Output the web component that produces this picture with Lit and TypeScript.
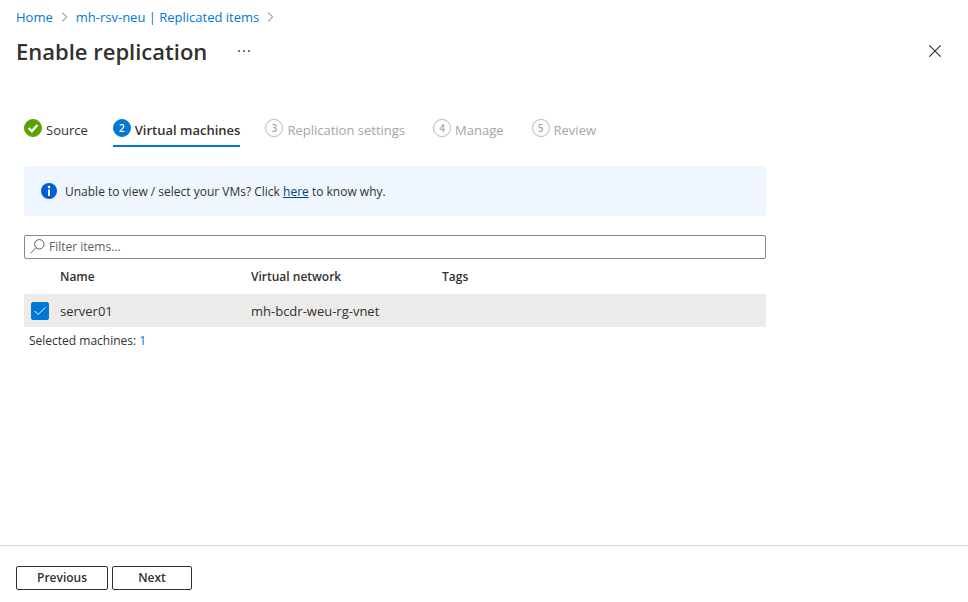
import { LitElement, html, css, svg } from "lit";
import { customElement, state } from "lit/decorators.js";
import { classMap } from "lit/directives/class-map.js";

interface Step {
  label: string;
  status: "done" | "current" | "pending";
}

interface Machine {
  name: string;
  network: string;
  tags: string;
}

const steps: Step[] = [
  { label: "Source", status: "done" },
  { label: "Virtual machines", status: "current" },
  { label: "Replication settings", status: "pending" },
  { label: "Manage", status: "pending" },
  { label: "Review", status: "pending" },
];

const machines: Machine[] = [
  { name: "server01", network: "mh-bcdr-weu-rg-vnet", tags: "" },
];

const chevron = html`<svg class="chevron" width="7" height="10" viewBox="0 0 7 10" aria-hidden="true">
  ${svg`<path d="M1 .5 5.7 5 1 9.5" fill="none" stroke="#797775" />`}
</svg>`;

@customElement("app-root")
export class AppRoot extends LitElement {
  @state() private filter = "";
  @state() private selected = new Set<string>(["server01"]);

  static styles = css`
    :host {
      display: flex;
      flex-direction: column;
      min-height: 100vh;
      background: #fff;
      color: #323130;
      font: 13px/20px "Open Sans", "Noto Sans", sans-serif;
    }
    * {
      box-sizing: border-box;
    }
    button,
    input {
      font: inherit;
      color: inherit;
    }
    button {
      cursor: pointer;
    }
    a {
      color: #0078d4;
      text-decoration: none;
    }
    svg {
      display: block;
      flex: none;
    }
    .breadcrumb {
      display: flex;
      align-items: center;
      gap: 8px;
      padding: 7px 16px 0;
    }
    .title-bar {
      display: flex;
      align-items: center;
      height: 48px;
      padding: 0 20px 0 16px;
    }
    h1 {
      margin: 0;
      font-size: 22px;
      line-height: 32px;
      font-weight: 600;
    }
    .icon-button {
      display: grid;
      place-items: center;
      width: 26px;
      height: 26px;
      padding: 0;
      border: 0;
      background: none;
    }
    .more {
      margin-left: 24px;
    }
    .close {
      margin-left: auto;
    }
    main {
      flex: 1;
      width: 100%;
      max-width: 790px;
      padding: 44px 24px 24px;
    }
    .steps {
      display: flex;
      gap: 25px;
    }
    .step {
      display: flex;
      align-items: flex-start;
      gap: 4px;
      height: 28px;
      padding: 0 0 4px;
      border: 0;
      border-bottom: 2px solid transparent;
      background: none;
      line-height: 22px;
      white-space: nowrap;
    }
    .step.current {
      border-color: #0078d4;
      font-weight: 600;
    }
    .step.pending {
      padding-right: 3px;
      color: #a6a6a6;
    }
    .badge {
      display: grid;
      place-items: center;
      width: 18px;
      height: 18px;
      border: 1px solid #b8b8b8;
      border-radius: 50%;
      font-size: 10px;
      line-height: 16px;
      font-weight: 600;
    }
    .done .badge {
      border-color: #57a300;
      background: #57a300;
    }
    .current .badge {
      border-color: #0078d4;
      background: #0078d4;
      color: #fff;
    }
    .notice {
      display: flex;
      align-items: center;
      gap: 8px;
      height: 50px;
      margin-top: 19px;
      padding: 0 17px;
      border-radius: 2px;
      background: #eff6ff;
      font-size: 12px;
    }
    .notice p {
      margin: 0;
      padding-top: 2px;
    }
    .notice a {
      color: #004578;
      text-decoration: underline;
    }
    .filter {
      display: flex;
      align-items: center;
      gap: 4px;
      height: 24px;
      margin-top: 19px;
      padding: 0 5px;
      border: 1px solid #8a8886;
      border-radius: 2px;
      font-size: 12px;
    }
    .filter svg {
      margin-bottom: 2px;
    }
    .filter input {
      flex: 1;
      min-width: 0;
      padding: 0;
      border: 0;
      outline: 0;
      background: none;
    }
    .filter input::placeholder {
      color: #605e5c;
      opacity: 1;
    }
    table {
      width: 100%;
      table-layout: fixed;
      border-collapse: collapse;
      text-align: left;
    }
    th {
      height: 35px;
      padding: 0;
      font-size: 12px;
      font-weight: 600;
    }
    td {
      height: 33px;
      padding: 0;
    }
    .pick {
      width: 36px;
      padding-left: 7px;
    }
    .text-col {
      width: 191px;
    }
    tr.selected {
      background: #edebe9;
    }
    .check {
      display: grid;
      place-items: center;
      width: 18px;
      height: 18px;
      border: 1px solid #323130;
      border-radius: 2px;
    }
    .check input,
    .check svg {
      grid-area: 1 / 1;
    }
    .check input {
      width: 16px;
      height: 16px;
      margin: 0;
      opacity: 0;
    }
    .check svg {
      visibility: hidden;
      pointer-events: none;
    }
    .selected .check {
      border-color: #0078d4;
      background: #0078d4;
    }
    .selected .check svg {
      visibility: visible;
    }
    .summary {
      margin: 4px 0 0;
      padding-left: 5px;
      font-size: 12px;
    }
    footer {
      display: flex;
      gap: 4px;
      padding: 20px 16px 12px;
      border-top: 1px solid #d6d6d6;
    }
    .action {
      min-width: 80px;
      height: 24px;
      padding: 0 20px;
      border: 1px solid #323130;
      border-radius: 2px;
      background: #fff;
      font-size: 12px;
      font-weight: 600;
    }
  `;

  private toggle(name: string) {
    const next = new Set(this.selected);
    if (!next.delete(name)) next.add(name);
    this.selected = next;
  }

  private renderStep(step: Step, index: number) {
    return html`<button
      class=${classMap({ step: true, [step.status]: true })}
      role="tab"
      aria-selected=${step.status === "current"}
      ?disabled=${step.status === "pending"}
    >
      <span class="badge"
        >${step.status === "done"
          ? html`<svg width="16" height="16" viewBox="0 0 16 16" aria-label="Completed">
              <path d="M3.6 8 6.8 11.2 12.4 5" fill="none" stroke="#fff" stroke-width="2.4" />
            </svg>`
          : index + 1}</span
      >
      <span>${step.label}</span>
    </button>`;
  }

  private renderRow(machine: Machine) {
    const picked = this.selected.has(machine.name);
    return html`<tr class=${classMap({ selected: picked })}>
      <td class="pick">
        <label class="check">
          <input
            type="checkbox"
            aria-label=${`Select ${machine.name}`}
            .checked=${picked}
            @change=${() => this.toggle(machine.name)}
          />
          <svg width="12" height="10" viewBox="0 0 12 10" aria-hidden="true">
            <path d="M.7 5 4.2 8.5 11.3 1.4" fill="none" stroke="#fff" />
          </svg>
        </label>
      </td>
      <td>${machine.name}</td>
      <td>${machine.network}</td>
      <td>${machine.tags}</td>
    </tr>`;
  }

  render() {
    const rows = machines.filter((m) => m.name.includes(this.filter));
    return html`
      <nav class="breadcrumb" aria-label="Breadcrumb">
        <a href="#home">Home</a>${chevron}
        <a href="#items">mh-rsv-neu | Replicated items</a>${chevron}
      </nav>
      <header class="title-bar">
        <h1>Enable replication</h1>
        <button class="icon-button more" aria-label="More actions">
          <svg width="12" height="2" viewBox="0 0 12 2" fill="#797775">
            <rect width="2" height="2" />
            <rect x="5" width="2" height="2" />
            <rect x="10" width="2" height="2" />
          </svg>
        </button>
        <button class="icon-button close" aria-label="Close">
          <svg width="12" height="12" viewBox="0 0 12 12">
            <path d="M.3 .3 11.7 11.7M11.7 .3 .3 11.7" stroke="#323130" stroke-width="1.1" />
          </svg>
        </button>
      </header>
      <main>
        <div class="steps" role="tablist">${steps.map((s, i) => this.renderStep(s, i))}</div>
        <div class="notice">
          <svg width="16" height="16" viewBox="0 0 16 16" aria-hidden="true">
            <circle cx="8" cy="8" r="8" fill="#015cda" />
            <circle cx="8" cy="4" r="1.3" fill="#fff" />
            <rect x="7" y="6.4" width="2" height="6.6" rx=".4" fill="#fff" />
          </svg>
          <p>Unable to view / select your VMs? Click <a href="#help">here</a> to know why.</p>
        </div>
        <label class="filter">
          <svg width="15" height="15" viewBox="0 0 15 15" aria-hidden="true">
            <g fill="none" stroke="#605e5c">
              <circle cx="9.3" cy="5.3" r="4.7" />
              <path d="M6 8.7 .5 14.2" />
            </g>
          </svg>
          <input
            type="text"
            placeholder="Filter items..."
            aria-label="Filter items"
            .value=${this.filter}
            @input=${(e: Event) => (this.filter = (e.target as HTMLInputElement).value)}
          />
        </label>
        <table>
          <thead>
            <tr>
              <th class="pick"></th>
              <th class="text-col" scope="col">Name</th>
              <th class="text-col" scope="col">Virtual network</th>
              <th scope="col">Tags</th>
            </tr>
          </thead>
          <tbody>
            ${rows.map((m) => this.renderRow(m))}
          </tbody>
        </table>
        <p class="summary">Selected machines: <a href="#selected">${this.selected.size}</a></p>
      </main>
      <footer>
        <button class="action">Previous</button>
        <button class="action">Next</button>
      </footer>
    `;
  }
}
